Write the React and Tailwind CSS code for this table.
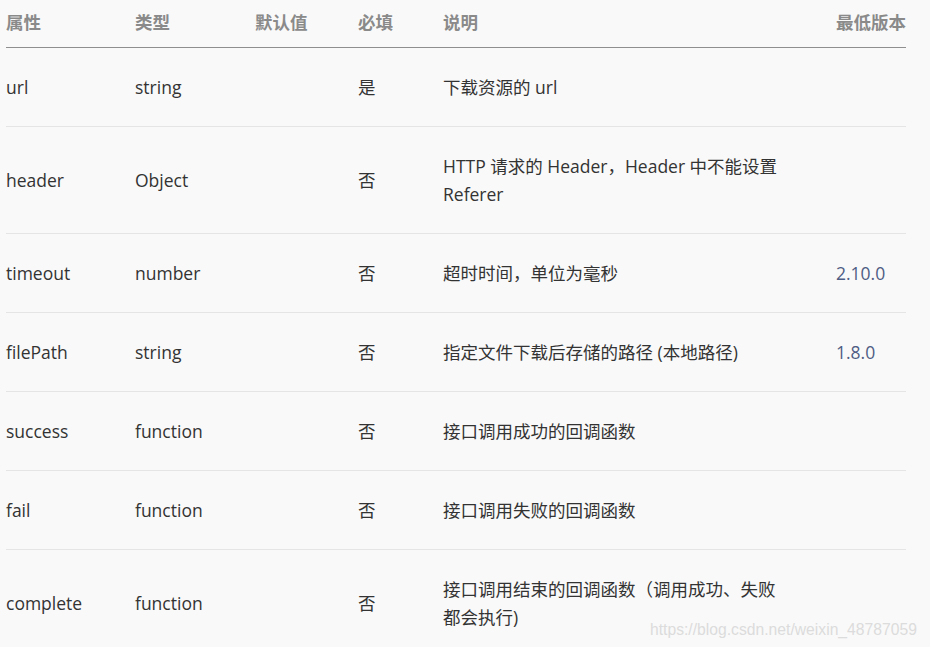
const rows = [
  { name: 'url', type: 'string', def: '', req: '是', desc: '下载资源的 url', ver: '' },
  { name: 'header', type: 'Object', def: '', req: '否', desc: 'HTTP 请求的 Header，Header 中不能设置 Referer', ver: '' },
  { name: 'timeout', type: 'number', def: '', req: '否', desc: '超时时间，单位为毫秒', ver: '2.10.0' },
  { name: 'filePath', type: 'string', def: '', req: '否', desc: '指定文件下载后存储的路径 (本地路径)', ver: '1.8.0' },
  { name: 'success', type: 'function', def: '', req: '否', desc: '接口调用成功的回调函数', ver: '' },
  { name: 'fail', type: 'function', def: '', req: '否', desc: '接口调用失败的回调函数', ver: '' },
  { name: 'complete', type: 'function', def: '', req: '否', desc: '接口调用结束的回调函数（调用成功、失败都会执行)', ver: '' },
];

const cols = 'grid grid-cols-[129px_120px_103px_85px_393px_70px]';

export default function App() {
  return (
    <div
      className="relative h-[647px] w-[930px] overflow-hidden bg-[#f9f9f9] pl-[6px] text-[17.5px] leading-[28px] text-[#333]"
      style={{ fontFamily: '"Open Sans", "Noto Sans CJK SC", sans-serif' }}
    >
      <div className="w-[900px]">
        <div className={`${cols} border-b border-[#8f8f8f] pt-[8px] pb-[11px] font-bold text-[#8a8a8a]`}>
          <div>属性</div>
          <div>类型</div>
          <div>默认值</div>
          <div>必填</div>
          <div>说明</div>
          <div className="text-right">最低版本</div>
        </div>
        {rows.map((r) => (
          <div key={r.name} className={`${cols} items-center border-b border-[#e5e5e5] py-[25px]`}>
            <div>{r.name}</div>
            <div>{r.type}</div>
            <div>{r.def}</div>
            <div>{r.req}</div>
            <div className="pr-[48px]">{r.desc}</div>
            <div className="text-[#4e5d84]">{r.ver}</div>
          </div>
        ))}
      </div>
      {/* watermark */}
      <div
        className="absolute left-[650px] top-[618px] text-[15.7px] leading-[24px] text-[#dcdcdc]"
        style={{ fontFamily: '"Liberation Sans", Arial, sans-serif' }}
      >
        https://blog.csdn.net/weixin_48787059
      </div>
    </div>
  );
}
